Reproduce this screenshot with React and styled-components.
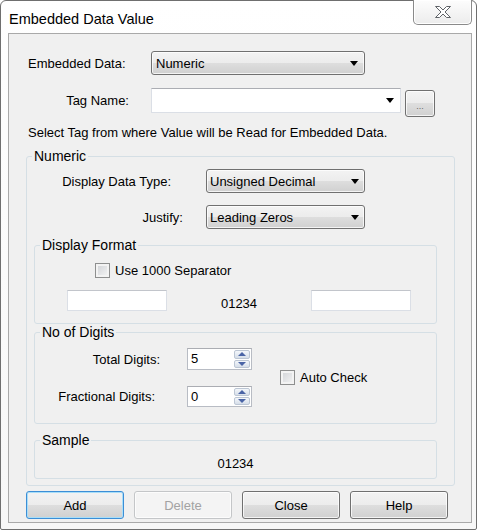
import styled, { createGlobalStyle } from 'styled-components'

const GlobalStyle = createGlobalStyle`
  html, body { margin: 0; padding: 0; background: #ffffff; }
  body {
    font-family: "Liberation Sans", Arial, sans-serif;
    font-size: 13px;
    color: #000;
  }
  * { box-sizing: border-box; }
`

const Window = styled.div`
  width: 477px;
  height: 530px;
  border: 1px solid #6f6f6f;
  border-radius: 6px 6px 2px 2px;
  background: linear-gradient(#ffffff, #f7f7f7);
  padding: 0 4px 6px 7px;
  display: flex;
  flex-direction: column;
`

const TitleBar = styled.div`
  height: 32px;
  display: flex;
  align-items: flex-start;
`

const Title = styled.div`
  margin: 10px 0 0 1px;
  font-size: 14.5px;
  line-height: 17px;
`

const CloseBox = styled.div`
  margin: -1px 0 0 auto;
  width: 59px;
  height: 25px;
  border: 1px solid #8a8a8a;
  border-top: none;
  border-radius: 0 0 5px 5px;
  background: linear-gradient(#fdfdfd, #ececec);
  box-shadow: inset 0 0 0 1px #ffffff;
  display: flex;
  align-items: center;
  justify-content: center;
  padding-bottom: 1px;
`

const Client = styled.div`
  flex: 1;
  border: 1px solid #a9a9a9;
  background: #f0f0f0;
  display: flex;
  flex-direction: column;
  padding-top: 17px;
`

const Row = styled.div`
  display: flex;
  align-items: ${p => p.$align || 'center'};
  height: ${p => p.$h}px;
  margin-top: ${p => p.$mt || 0}px;
`

const Label = styled.div`
  width: ${p => p.$w}px;
  flex: none;
  text-align: ${p => p.$left ? 'left' : 'right'};
  padding-left: ${p => p.$pl || 0}px;
  padding-right: ${p => p.$pr || 0}px;
  line-height: ${p => p.$lh || 'normal'};
  white-space: nowrap;
`

const Combo = styled.div`
  width: ${p => p.$w}px;
  height: 24px;
  border: 1px solid #707070;
  border-radius: 3px;
  background: linear-gradient(#f3f3f3 0%, #ececec 50%, #dedede 50%, #d0d0d0 100%);
  box-shadow: inset 0 0 0 1px rgba(255, 255, 255, 0.75);
  display: flex;
  align-items: center;
  padding-left: ${p => p.$pl || 3}px;
  white-space: nowrap;
`

const EditCombo = styled.div`
  width: 250px;
  height: 25px;
  background: #fff;
  border: 1px solid #dbdfe6;
  border-top-color: #abadb3;
  display: flex;
  align-items: center;
`

const Arrow = styled.span`
  margin-left: auto;
  margin-right: ${p => p.$mr || 5}px;
  width: 0;
  height: 0;
  border-left: 4.5px solid transparent;
  border-right: 4.5px solid transparent;
  border-top: 5px solid #000;
`

const BrowseButton = styled.div`
  margin: 2px 0 0 4px;
  align-self: flex-start;
  width: 30px;
  height: 27px;
  border: 1px solid #707070;
  border-radius: 3px;
  background: linear-gradient(#f3f3f3 0%, #ececec 50%, #dedede 50%, #d0d0d0 100%);
  box-shadow: inset 0 0 0 1px rgba(255, 255, 255, 0.75);
  display: flex;
  align-items: flex-end;
  justify-content: center;
  font-size: 9px;
  line-height: 9px;
  color: #6a6a6a;
  padding-bottom: 5px;
`

const Hint = styled.div`
  margin-top: 9px;
  padding-left: 19px;
  line-height: 15px;
`

const Group = styled.fieldset`
  margin: ${p => p.$m};
  padding: 0 0 ${p => p.$pb}px 0;
  border: 1px solid #d5dfe5;
  border-radius: 3px;
  min-width: 0;
  display: flex;
  flex-direction: column;
`

const Legend = styled.legend`
  font-size: 14px;
  line-height: 16px;
  padding: 0 2px;
  margin-left: 5px;
`

const CheckRow = styled.div`
  display: flex;
  align-items: center;
  height: 16px;
  margin-top: ${p => p.$mt || 0}px;
  padding-left: ${p => p.$pl || 0}px;
  gap: 5px;
`

const CheckBox = styled.span`
  width: 15px;
  height: 15px;
  flex: none;
  border: 1px solid #8e8f8f;
  background: linear-gradient(135deg, #cfd1d5, #f6f6f6);
  box-shadow: inset 0 0 0 2px #f3f3f3;
`

const BoxRow = styled.div`
  display: flex;
  align-items: center;
  height: 21px;
  margin-top: 12px;
  padding: 0 25px 0 32px;
`

const TextBox = styled.div`
  width: 100px;
  height: 21px;
  background: #fff;
  border: 1px solid #dbdfe6;
  border-top-color: #c2c5cb;
`

const CenterText = styled.div`
  flex: 1;
  text-align: center;
  line-height: 15px;
  margin-top: ${p => p.$mt || 0}px;
`

const DigitsGrid = styled.div`
  margin-top: 8px;
  display: grid;
  grid-template-columns: 152px 65px auto;
  grid-template-rows: 22px 21px;
  row-gap: 16px;
  align-items: center;
`

const SpinBox = styled.div`
  height: 100%;
  background: #fff;
  border: 1px solid #b8bcc4;
  border-top-color: #abadb3;
  display: flex;
  padding: 1px;
`

const SpinValue = styled.div`
  flex: 1;
  padding-left: 2px;
  line-height: 17px;
`

const SpinButtons = styled.div`
  width: 16px;
  display: flex;
  flex-direction: column;
  gap: 1px;
`

const SpinHalf = styled.div`
  flex: 1;
  border: 1px solid #bcc6d4;
  border-radius: 2px;
  background: linear-gradient(#f4f7fb, #d6dee9);
  display: flex;
  align-items: center;
  justify-content: center;
`

const SpinArrow = styled.span`
  width: 0;
  height: 0;
  border-left: 4px solid transparent;
  border-right: 4px solid transparent;
  ${p => p.$down
    ? 'border-top: 4px solid #4a64a6;'
    : 'border-bottom: 4px solid #4a64a6;'}
`

const AutoCheck = styled(CheckRow)`
  grid-column: 3;
  grid-row: 1 / span 2;
  margin-left: 28px;
`

const ButtonBar = styled.div`
  display: flex;
  gap: 10px;
  margin-top: 5px;
  padding-left: 17px;
`

const Button = styled.div`
  width: 98px;
  height: 28px;
  border: 1px solid ${p => p.$primary ? '#3c8ed6' : p.$disabled ? '#c4c6c8' : '#707070'};
  border-radius: 3px;
  background: ${p => p.$disabled
    ? '#f4f4f4'
    : 'linear-gradient(#f3f3f3 0%, #ececec 50%, #dedede 50%, #d0d0d0 100%)'};
  box-shadow: inset 0 0 0 1px ${p => p.$primary ? '#a9def8' : 'rgba(255,255,255,0.75)'};
  color: ${p => p.$disabled ? '#a3a3a3' : '#000'};
  display: flex;
  align-items: center;
  justify-content: center;
`

const CloseGlyph = () => (
  <svg width="18" height="14" viewBox="0 0 18 14">
    <path
      d="M1.5 1.5 H5.5 L9 5 L12.5 1.5 H16.5 L11 7 L16.5 12.5 H12.5 L9 9 L5.5 12.5 H1.5 L7 7 Z"
      fill="#ffffff"
      stroke="#5f6368"
      strokeWidth="1"
      strokeLinejoin="round"
    />
  </svg>
)

const Spin = ({ value }) => (
  <SpinBox>
    <SpinValue>{value}</SpinValue>
    <SpinButtons>
      <SpinHalf><SpinArrow /></SpinHalf>
      <SpinHalf><SpinArrow $down /></SpinHalf>
    </SpinButtons>
  </SpinBox>
)

export default function App() {
  return (
    <>
      <GlobalStyle />
      <Window>
        <TitleBar>
          <Title>Embedded Data Value</Title>
          <CloseBox><CloseGlyph /></CloseBox>
        </TitleBar>

        <Client>
          <Row $h={24}>
            <Label $w={142} $left $pl={19}>Embedded Data:</Label>
            <Combo $w={214} $pl={4}>Numeric<Arrow $mr={6} /></Combo>
          </Row>

          <Row $h={28} $mt={13} $align="flex-start">
            <Label $w={142} $pr={22} $lh="25px">Tag Name:</Label>
            <EditCombo><Arrow $mr={6} /></EditCombo>
            <BrowseButton>...</BrowseButton>
          </Row>

          <Hint>Select Tag from where Value will be Read for Embedded Data.</Hint>

          <Group $m="8px 16px 0 17px" $pb={6}>
            <Legend>Numeric</Legend>

            <Row $h={24} $mt={5}>
              <Label $w={179} $pr={35}>Display Data Type:</Label>
              <Combo $w={159}>Unsigned Decimal<Arrow /></Combo>
            </Row>
            <Row $h={24} $mt={12}>
              <Label $w={179} $pr={23}>Justify:</Label>
              <Combo $w={159}>Leading Zeros<Arrow /></Combo>
            </Row>

            <Group $m="8px 17px 0 7px" $pb={12}>
              <Legend>Display Format</Legend>
              <CheckRow $mt={9} $pl={60}>
                <CheckBox />
                <span>Use 1000 Separator</span>
              </CheckRow>
              <BoxRow>
                <TextBox />
                <CenterText $mt={6}>01234</CenterText>
                <TextBox />
              </BoxRow>
            </Group>

            <Group $m="0 17px 0 7px" $pb={16}>
              <Legend>No of Digits</Legend>
              <DigitsGrid>
                <Label $w={152} $pr={27}>Total Digits:</Label>
                <Spin value="5" />
                <AutoCheck>
                  <CheckBox />
                  <span>Auto Check</span>
                </AutoCheck>
                <Label $w={152} $pr={32}>Fractional Digits:</Label>
                <Spin value="0" />
              </DigitsGrid>
            </Group>

            <Group $m="8px 17px 0 7px" $pb={7}>
              <Legend>Sample</Legend>
              <CenterText $mt={8}>01234</CenterText>
            </Group>
          </Group>

          <ButtonBar>
            <Button $primary>Add</Button>
            <Button $disabled>Delete</Button>
            <Button>Close</Button>
            <Button>Help</Button>
          </ButtonBar>
        </Client>
      </Window>
    </>
  )
}
